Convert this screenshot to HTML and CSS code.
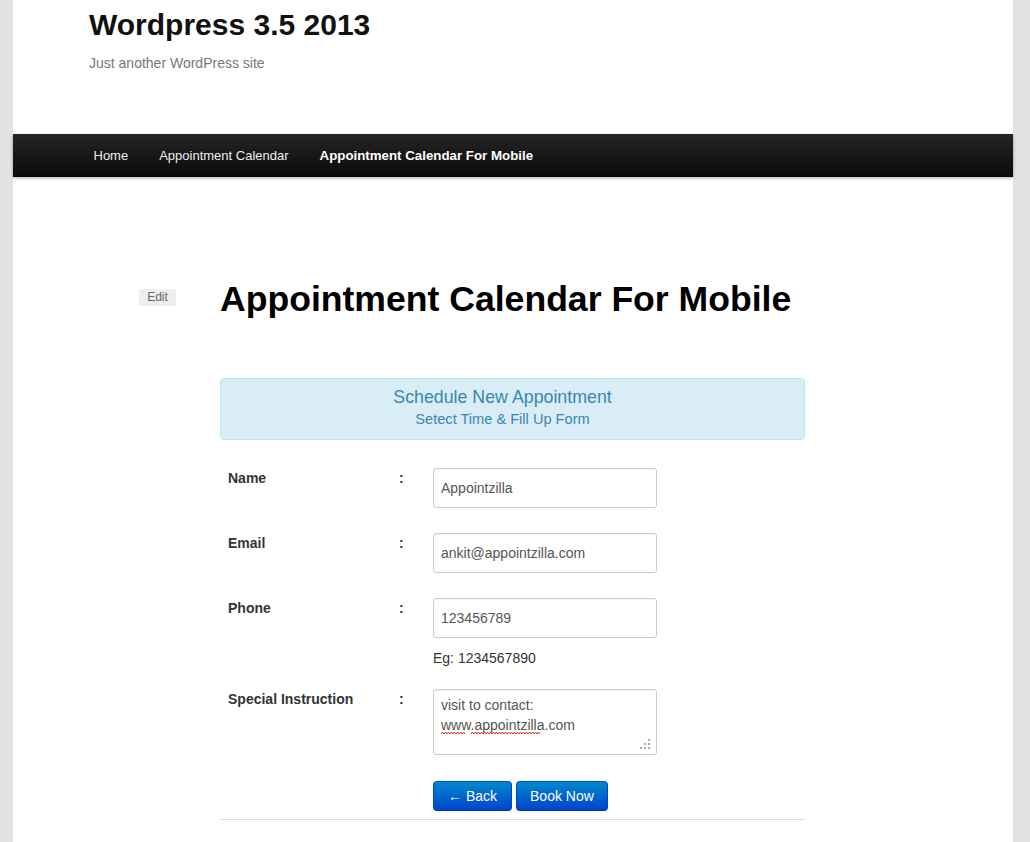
FILE: index.html
```html
<!DOCTYPE html>
<html>
<head>
<meta charset="utf-8">
<title>Appointment Calendar For Mobile | Wordpress 3.5 2013</title>
<link rel="stylesheet" href="styles.css">
</head>
<body>
<div class="page">
  <header class="site-header">
    <h1 class="site-title">Wordpress 3.5 2013</h1>
    <p class="site-desc">Just another WordPress site</p>
  </header>
  <nav class="main-nav">
    <ul class="menu">
      <li><a href="#">Home</a></li>
      <li><a href="#">Appointment Calendar</a></li>
      <li class="current"><a href="#">Appointment Calendar For Mobile</a></li>
    </ul>
  </nav>
  <main class="main">
    <div class="entry-meta">
      <a class="edit-link" href="#">Edit</a>
    </div>
    <article class="entry">
      <h1 class="entry-title">Appointment Calendar For Mobile</h1>
      <div class="alert-info">
        <div class="alert-title">Schedule New Appointment</div>
        <div class="alert-sub">Setect Time &amp; Fill Up Form</div>
      </div>
      <form class="book-form">
        <div class="row">
          <label class="lbl">Name</label>
          <span class="colon">:</span>
          <div class="field"><input class="inp" type="text" value="Appointzilla"></div>
        </div>
        <div class="row">
          <label class="lbl">Email</label>
          <span class="colon">:</span>
          <div class="field"><input class="inp" type="text" value="ankit@appointzilla.com"></div>
        </div>
        <div class="row row-phone">
          <label class="lbl">Phone</label>
          <span class="colon">:</span>
          <div class="field">
            <input class="inp" type="text" value="123456789">
            <div class="hint">Eg: 1234567890</div>
          </div>
        </div>
        <div class="row row-text">
          <label class="lbl">Special Instruction</label>
          <span class="colon">:</span>
          <div class="field">
            <div class="txt-wrap">
              <textarea class="txt" spellcheck="false">visit to contact:
www.appointzilla.com</textarea>
              <svg class="spell" width="104" height="4" viewBox="0 0 104 4">
                <path d="M0 3 L1.5 1 L3 3 L4.5 1 L6 3 L7.5 1 L9 3 L10.5 1 L12 3 L13.5 1 L15 3 L16.5 1 L18 3 L19.5 1 L21 3 L22.5 1 L24 3" fill="none" stroke="#e03030" stroke-width="1"/>
                <path d="M30 3 L31.5 1 L33 3 L34.5 1 L36 3 L37.5 1 L39 3 L40.5 1 L42 3 L43.5 1 L45 3 L46.5 1 L48 3 L49.5 1 L51 3 L52.5 1 L54 3 L55.5 1 L57 3 L58.5 1 L60 3 L61.5 1 L63 3 L64.5 1 L66 3 L67.5 1 L69 3 L70.5 1 L72 3 L73.5 1 L75 3 L76.5 1 L78 3 L79.5 1 L81 3 L82.5 1 L84 3 L85.5 1 L87 3 L88.5 1 L90 3 L91.5 1 L93 3 L94.5 1 L96 3 L97.5 1 L99 3" fill="none" stroke="#e03030" stroke-width="1"/>
              </svg>
              <svg class="grip" width="10" height="10" viewBox="0 0 10 10">
                <rect x="8" y="0" width="2" height="2" fill="#aaa"/>
                <rect x="4" y="4" width="2" height="2" fill="#aaa"/>
                <rect x="8" y="4" width="2" height="2" fill="#aaa"/>
                <rect x="0" y="8" width="2" height="2" fill="#aaa"/>
                <rect x="4" y="8" width="2" height="2" fill="#aaa"/>
                <rect x="8" y="8" width="2" height="2" fill="#aaa"/>
              </svg>
            </div>
          </div>
        </div>
        <div class="row row-btns">
          <span class="lbl"></span>
          <span class="colon"></span>
          <div class="field btns">
            <button type="button" class="btn btn-back">&larr; Back</button>
            <button type="button" class="btn">Book Now</button>
          </div>
        </div>
      </form>
      <hr class="sep">
    </article>
  </main>
</div>
</body>
</html>
```
FILE: styles.css
```css
html, body {
  margin: 0;
  padding: 0;
}
body {
  background: #e2e2e2;
  font-family: "Liberation Sans", Arial, sans-serif;
  color: #333;
}
.page {
  width: 1000px;
  margin-left: 13px;
  background: #fff;
  min-height: 842px;
}
.site-header {
  padding: 5px 0 0 76px;
  height: 134px;
  box-sizing: border-box;
}
.site-title {
  margin: 0;
  font-size: 30px;
  line-height: 40px;
  font-weight: bold;
  color: #111;
}
.site-desc {
  margin: 8px 0 0;
  font-size: 14px;
  line-height: 20px;
  color: #777;
}
.main-nav {
  height: 43px;
  background: linear-gradient(#252525, #0a0a0a);
  box-shadow: 0 1px 3px rgba(0,0,0,0.35);
}
.menu {
  list-style: none;
  margin: 0;
  padding: 0 0 0 65px;
  display: flex;
  height: 43px;
  align-items: center;
}
.menu li a {
  display: block;
  padding: 0 15.5px;
  font-size: 13px;
  line-height: 43px;
  color: #eee;
  text-decoration: none;
}
.menu li.current a {
  font-weight: bold;
  color: #fff;
  font-size: 13.3px;
}
.main {
  display: flex;
  padding-top: 101px;
}
.entry-meta {
  width: 207px;
  box-sizing: border-box;
  padding: 9px 0 0 126px;
}
.edit-link {
  display: inline-block;
  width: 37px;
  height: 17px;
  line-height: 17px;
  text-align: center;
  font-size: 12px;
  color: #666;
  background: #eee;
  border-radius: 2px;
  text-decoration: none;
}
.entry {
  width: 585px;
}
.entry-title {
  margin: 0;
  font-size: 35.6px;
  line-height: 43px;
  font-weight: bold;
  color: #000;
}
.alert-info {
  margin-top: 57px;
  background: #d9edf7;
  border: 1px solid #bce8f1;
  border-radius: 4px;
  color: #3a87ad;
  text-align: center;
  padding: 7px 20px 10px 0;
}
.alert-title {
  font-size: 17.8px;
  line-height: 22px;
}
.alert-sub {
  font-size: 14.6px;
  line-height: 20px;
  margin-top: 1px;
}
.book-form {
  margin-top: 28px;
  padding-left: 8px;
}
.row {
  display: grid;
  grid-template-columns: 171px 34px 1fr;
  margin-bottom: 25px;
}
.row-phone {
  margin-bottom: 21px;
}
.row-text {
  margin-bottom: 26px;
}
.row-btns {
  margin-bottom: 0;
}
.lbl {
  font-size: 14px;
  font-weight: bold;
  line-height: 20px;
  color: #333;
}
.colon {
  font-size: 14px;
  font-weight: bold;
  line-height: 20px;
  color: #333;
}
.inp {
  display: block;
  box-sizing: border-box;
  width: 224px;
  height: 40px;
  margin: 0;
  padding: 0 7px;
  border: 1px solid #ccc;
  border-radius: 3px;
  font-family: "Liberation Sans", Arial, sans-serif;
  font-size: 14px;
  color: #555;
  background: #fff;
  box-shadow: inset 0 1px 1px rgba(0,0,0,0.05);
}
.hint {
  margin-top: 10px;
  font-size: 14px;
  line-height: 20px;
  color: #333;
}
.txt-wrap {
  position: relative;
  width: 224px;
  height: 66px;
}
.txt {
  display: block;
  box-sizing: border-box;
  width: 224px;
  height: 66px;
  margin: 0;
  padding: 5px 7px;
  border: 1px solid #ccc;
  border-radius: 3px;
  font-family: "Liberation Sans", Arial, sans-serif;
  font-size: 14px;
  line-height: 20px;
  color: #555;
  resize: none;
  box-shadow: inset 0 1px 1px rgba(0,0,0,0.05);
}
.spell {
  position: absolute;
  left: 8px;
  top: 42px;
  pointer-events: none;
}
.grip {
  position: absolute;
  right: 7px;
  bottom: 6px;
  pointer-events: none;
}
.btns {
  display: flex;
  gap: 4px;
}
.btn {
  height: 30px;
  padding: 0 13px;
  margin: 0;
  border: 1px solid #0044aa;
  border-color: #0055cc #0044cc #0033aa;
  border-radius: 4px;
  background: linear-gradient(#0088cc, #0044cc);
  color: #fff;
  font-family: "Liberation Sans", Arial, sans-serif;
  font-size: 14px;
  line-height: 28px;
  cursor: pointer;
}
.btn-back {
  padding: 0 14px;
}
.sep {
  margin: 8px 0 0;
  border: 0;
  border-top: 1px solid #ddd;
  height: 0;
}
```
